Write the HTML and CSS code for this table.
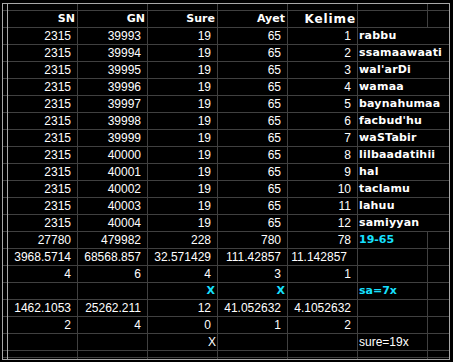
FILE: index.html
```html
<!DOCTYPE html>
<html>
<head>
<meta charset="utf-8">
<link rel="stylesheet" href="styles.css">
</head>
<body>
<div class="sheet">
  <div class="c"></div><div class="c"></div><div class="c"></div><div class="c"></div><div class="c"></div><div class="c"></div><div class="c"></div><div class="c"></div>

  <div class="c"></div><div class="c h">SN</div><div class="c h">GN</div><div class="c h">Sure</div><div class="c h">Ayet</div><div class="c h spaced">Kelime</div><div class="c"></div><div class="c"></div>

  <div class="c"></div><div class="c n">2315</div><div class="c n">39993</div><div class="c n">19</div><div class="c n">65</div><div class="c n">1</div><div class="c w">rabbu</div>
  <div class="c"></div><div class="c n">2315</div><div class="c n">39994</div><div class="c n">19</div><div class="c n">65</div><div class="c n">2</div><div class="c w">ssamaawaati</div>
  <div class="c"></div><div class="c n">2315</div><div class="c n">39995</div><div class="c n">19</div><div class="c n">65</div><div class="c n">3</div><div class="c w">wal'arDi</div>
  <div class="c"></div><div class="c n">2315</div><div class="c n">39996</div><div class="c n">19</div><div class="c n">65</div><div class="c n">4</div><div class="c w">wamaa</div>
  <div class="c"></div><div class="c n">2315</div><div class="c n">39997</div><div class="c n">19</div><div class="c n">65</div><div class="c n">5</div><div class="c w">baynahumaa</div>
  <div class="c"></div><div class="c n">2315</div><div class="c n">39998</div><div class="c n">19</div><div class="c n">65</div><div class="c n">6</div><div class="c w">facbud'hu</div>
  <div class="c"></div><div class="c n">2315</div><div class="c n">39999</div><div class="c n">19</div><div class="c n">65</div><div class="c n">7</div><div class="c w">waSTabir</div>
  <div class="c"></div><div class="c n">2315</div><div class="c n">40000</div><div class="c n">19</div><div class="c n">65</div><div class="c n">8</div><div class="c w">lilbaadatihii</div>
  <div class="c"></div><div class="c n">2315</div><div class="c n">40001</div><div class="c n">19</div><div class="c n">65</div><div class="c n">9</div><div class="c w">hal</div>
  <div class="c"></div><div class="c n">2315</div><div class="c n">40002</div><div class="c n">19</div><div class="c n">65</div><div class="c n">10</div><div class="c w">taclamu</div>
  <div class="c"></div><div class="c n">2315</div><div class="c n">40003</div><div class="c n">19</div><div class="c n">65</div><div class="c n">11</div><div class="c w">lahuu</div>
  <div class="c"></div><div class="c n">2315</div><div class="c n">40004</div><div class="c n">19</div><div class="c n">65</div><div class="c n">12</div><div class="c w">samiyyan</div>

  <div class="c"></div><div class="c n">27780</div><div class="c n">479982</div><div class="c n">228</div><div class="c n">780</div><div class="c n">78</div><div class="c t cy">19-65</div><div class="c"></div>
  <div class="c"></div><div class="c n">3968.5714</div><div class="c n">68568.857</div><div class="c n">32.571429</div><div class="c n">111.42857</div><div class="c n wide">11.142857</div><div class="c"></div><div class="c"></div>
  <div class="c"></div><div class="c n">4</div><div class="c n">6</div><div class="c n">4</div><div class="c n">3</div><div class="c n">1</div><div class="c"></div><div class="c"></div>
  <div class="c"></div><div class="c"></div><div class="c"></div><div class="c x cy">X</div><div class="c x cy">X</div><div class="c"></div><div class="c t cy">sa=7x</div><div class="c"></div>
  <div class="c"></div><div class="c n">1462.1053</div><div class="c n">25262.211</div><div class="c n">12</div><div class="c n">41.052632</div><div class="c n">4.1052632</div><div class="c"></div><div class="c"></div>
  <div class="c"></div><div class="c n">2</div><div class="c n">4</div><div class="c n">0</div><div class="c n">1</div><div class="c n">2</div><div class="c"></div><div class="c"></div>
  <div class="c"></div><div class="c"></div><div class="c"></div><div class="c x">X</div><div class="c"></div><div class="c"></div><div class="c t">sure=19x</div><div class="c"></div>

  <div class="c"></div><div class="c"></div><div class="c"></div><div class="c"></div><div class="c"></div><div class="c"></div><div class="c"></div><div class="c"></div>
  <div class="c"></div><div class="c"></div><div class="c"></div><div class="c"></div><div class="c"></div><div class="c"></div><div class="c"></div><div class="c"></div>
</div>
</body>
</html>
```

FILE: styles.css
```css
html, body {
  margin: 0;
  padding: 0;
  background: #000;
}

.sheet {
  display: grid;
  grid-template-columns: 4px repeat(6, 69px) 21px;
  grid-template-rows: 6px repeat(20, 16px) 6px 1px;
  gap: 1px;
  width: max-content;
  margin: 3px 0 0 2px;
  border: 1px solid #a8a8a8;
  background:
    linear-gradient(to right, transparent 4px, #a8a8a8 4px, #a8a8a8 5px, transparent 5px),
    #404040;
}

.c {
  background: #000;
  color: #fff;
  font-family: "Liberation Sans", Arial, sans-serif;
  font-size: 12px;
  line-height: 16px;
  white-space: nowrap;
  overflow: hidden;
}

.n {
  text-align: right;
  padding-right: 6px;
}

.n.wide {
  padding-right: 10px;
}

.h {
  font-family: "DejaVu Sans", sans-serif;
  font-weight: bold;
  font-size: 11px;
  text-align: right;
  padding-right: 2px;
}

.h.spaced {
  font-size: 12px;
  letter-spacing: 0.9px;
  padding-right: 1px;
}

.w {
  grid-column: span 2;
  font-family: "DejaVu Sans", sans-serif;
  font-weight: bold;
  font-size: 11px;
  padding-left: 1px;
  letter-spacing: 0.2px;
}

.t {
  padding-left: 1px;
}

.x {
  text-align: right;
  padding-right: 1px;
}

.cy {
  color: #16e0ff;
  font-family: "DejaVu Sans", sans-serif;
  font-weight: bold;
  font-size: 11px;
}

.x.cy {
  padding-right: 2px;
}
```
